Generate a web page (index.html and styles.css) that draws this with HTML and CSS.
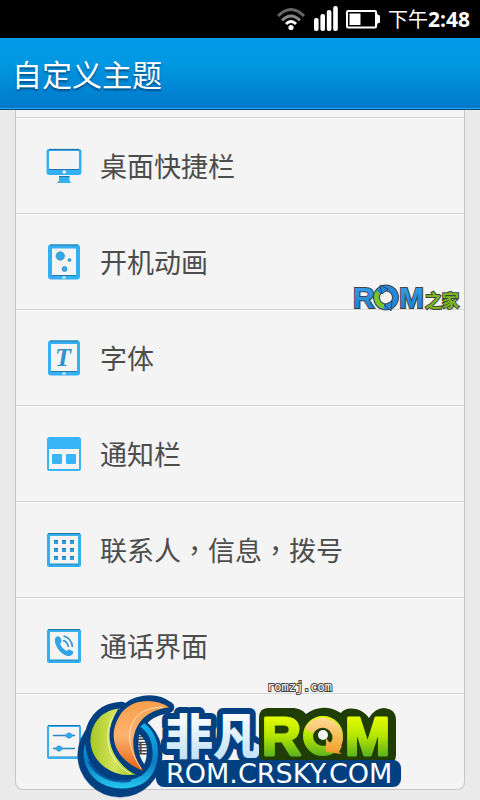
FILE: index.html
```html
<!DOCTYPE html>
<html lang="zh-CN">
<head>
  <meta charset="UTF-8">
  <meta name="viewport" content="width=device-width, initial-scale=1.0">
  <title>自定义主题</title>
  <link rel="stylesheet" href="styles.css">
</head>
<body>
  <div class="statusbar">
    <svg class="wifi" width="30" height="24" viewBox="0 0 30 24" fill="none" stroke-width="3">
      <path d="M2 9 Q15 -4 28 9" stroke="#666"/>
      <path d="M6 13.500 Q15 4.500 24 13.500" stroke="#888"/>
      <path d="M10 17 Q15 12 20 17" stroke="#fff"/>
      <circle cx="15" cy="20.500" r="2.600" fill="#fff"/>
    </svg>
    <svg class="signal" width="24" height="26" viewBox="0 0 24 26" fill="#fff">
      <rect x="0" y="12" width="4.600" height="13" rx="2"/>
      <rect x="6.400" y="8" width="4.600" height="17" rx="2"/>
      <rect x="12.800" y="4" width="4.600" height="21" rx="2"/>
      <rect x="19.200" y="0" width="4.600" height="25" rx="2"/>
    </svg>
    <svg class="battery" width="34" height="19" viewBox="0 0 34 19">
      <rect x="1" y="1" width="29" height="16.500" rx="1" fill="none" stroke="#fff" stroke-width="2"/>
      <path d="M30 1 L32 5 H33 Q34 5 34 7 V12 Q34 13 33 13 H32 L30 17.500 Z" fill="#fff"/>
      <rect x="3.500" y="3.500" width="11" height="11.500" fill="#fff"/>
    </svg>
    <span class="time">下午<b>2:48</b></span>
  </div>

  <header class="titlebar">
    <h1>自定义主题</h1>
  </header>

  <main class="content">
    <ul class="list">
      <li class="cut"></li>
      <li>
        <a class="row" href="#">
          <svg class="icon" viewBox="0 0 36 36">
            <path d="M3 1 H33 Q35.500 1 35.500 4 V24 Q35.500 27 33 27 H3 Q0.500 27 0.500 24 V4 Q0.500 1 3 1 Z" fill="#33b0f2"/>
            <path d="M3 1.500 H33" stroke="#2278ac" stroke-width="1.300"/>
            <rect x="3" y="3" width="30" height="18.500" rx="1" fill="#f4f4f4"/>
            <path d="M3 21.500 H33" stroke="#2278ac" stroke-width="1"/>
            <rect x="16.500" y="22.500" width="3.500" height="3" rx="1" fill="#f4f4f4"/>
            <path d="M13 28.500 H23.500 V33 L25.500 35 H10.500 L13 33 Z" fill="#33b0f2"/>
            <path d="M13 28.500 H23.500" stroke="#2278ac" stroke-width="1"/>
          </svg>
          <span>桌面快捷栏</span>
        </a>
      </li>
      <li>
        <a class="row" href="#">
          <svg class="icon" viewBox="0 0 36 36">
            <rect x="2" y="0.500" width="32" height="35" rx="3" fill="#33b0f2"/>
            <path d="M4 1 H32" stroke="#2278ac"/>
            <rect x="6" y="4.500" width="24" height="27" fill="#f4f4f4"/>
            <path d="M6 31.500 H30" stroke="#2278ac"/>
            <rect x="16.500" y="32.500" width="3" height="2" fill="#f4f4f4"/>
            <g fill="#33a9e8" stroke="#288abf" stroke-width="0.700">
              <circle cx="14.300" cy="12" r="4.200"/>
              <circle cx="23.500" cy="16" r="1.500"/>
              <circle cx="18.500" cy="25" r="2.500"/>
            </g>
          </svg>
          <span>开机动画</span>
        </a>
      </li>
      <li>
        <a class="row" href="#">
          <svg class="icon" viewBox="0 0 36 36">
            <rect x="2" y="0.500" width="32" height="35" rx="3" fill="#33b0f2"/>
            <path d="M4 1 H32" stroke="#2278ac"/>
            <rect x="5" y="4" width="26" height="27.500" fill="#f4f4f4"/>
            <path d="M5 31.500 H31" stroke="#2278ac"/>
            <rect x="16.500" y="32.500" width="3" height="2" fill="#f4f4f4"/>
            <text class="icon-t" x="17" y="26" text-anchor="middle">T</text>
          </svg>
          <span>字体</span>
        </a>
      </li>
      <li>
        <a class="row" href="#">
          <svg class="icon" viewBox="0 0 36 36">
            <rect x="1" y="1" width="34" height="34" rx="2.500" fill="#38b5f8"/>
            <rect x="3" y="13" width="30" height="20" fill="#f4f4f4"/>
            <rect x="6" y="18" width="10" height="10" rx="1" fill="#38b5f8"/>
            <rect x="20" y="18" width="10" height="10" rx="1" fill="#38b5f8"/>
          </svg>
          <span>通知栏</span>
        </a>
      </li>
      <li>
        <a class="row" href="#">
          <svg class="icon" viewBox="0 0 36 36">
            <rect x="1" y="1" width="34" height="34" rx="2" fill="#33b0f2"/>
            <path d="M2 1.500 H34 M4 32 H32" stroke="#2278ac"/>
            <rect x="4" y="4" width="28" height="27.500" fill="#f4f4f4"/>
            <g stroke="#2c9cdb" stroke-width="4" stroke-dasharray="4 4">
              <path d="M8 10 H28 M8 18 H28 M8 26 H28"/>
            </g>
            <g stroke="#2278ac" stroke-width="1" stroke-dasharray="4 4">
              <path d="M8 8.500 H28 M8 16.500 H28 M8 24.500 H28"/>
            </g>
          </svg>
          <span>联系人<i class="comma" lang="zh-TW">，</i>信息<i class="comma" lang="zh-TW">，</i>拨号</span>
        </a>
      </li>
      <li>
        <a class="row" href="#">
          <svg class="icon" viewBox="0 0 36 36">
            <rect x="1" y="1" width="34" height="34" rx="2" fill="#33b0f2"/>
            <path d="M2 1.500 H34 M4 32 H32" stroke="#2278ac"/>
            <rect x="4" y="4" width="28" height="27.500" fill="#f4f4f4"/>
            <path d="M10 9 Q8 11 9.500 16 Q12 23 18 26.500 Q22 29 25 27.500 Q28 25.500 27 23.500 L23.500 21.500 Q22 21 20.500 23 Q16 20.500 14 16 L15.500 14 Q16 13 15 11 L13.500 8.800 Q12 7.500 10 9 Z" fill="#2fa5e6"/>
            <path d="M17 12.500 Q21.500 13.500 22.500 19 M17.500 8 Q25.500 10 26.500 19" fill="none" stroke="#2b93cf" stroke-width="1.600"/>
          </svg>
          <span>通话界面</span>
        </a>
      </li>
      <li>
        <a class="row" href="#">
          <svg class="icon" viewBox="0 0 36 36">
            <rect x="1" y="1" width="34" height="34" rx="2" fill="#33b0f2"/>
            <path d="M2 1.500 H34 M4 32.500 H32" stroke="#2278ac"/>
            <rect x="3" y="3" width="30" height="29.500" fill="#f4f4f4"/>
            <path d="M7 11.500 H29 M7 24.500 H29" stroke="#2488c2" stroke-width="1.600"/>
            <path d="M19 11.500 Q23 6 27 11.500 Q23 17 19 11.500 Z M9 24.500 Q13 19 17 24.500 Q13 30 9 24.500 Z" fill="#33a9e8" stroke="#2488c2" stroke-width="0.500"/>
          </svg>
          <span>音量</span>
        </a>
      </li>
    </ul>
  </main>

  <!-- watermarks -->
  <svg class="mark mark-romzj" width="108" height="30" viewBox="353 283 108 30">
    <defs>
      <linearGradient id="romBlue" x1="0" y1="0" x2="0" y2="1">
        <stop offset="0" stop-color="#3aa5ee"/>
        <stop offset="1" stop-color="#1878cf"/>
      </linearGradient>
    </defs>
    <g class="rom-small" fill="url(#romBlue)">
      <text x="353" y="308">R</text>
      <text x="399" y="308">M</text>
    </g>
    <circle cx="386" cy="297.500" r="9.500" fill="none" stroke="#444" stroke-width="7"/>
    <circle cx="386" cy="297.500" r="9.500" fill="none" stroke="#2489dc" stroke-width="5"/>
    <path d="M378 292 A9.500 9.500 0 0 0 384 306.500" fill="none" stroke="#7cc51c" stroke-width="4.500"/>
    <path d="M380 285 L388 289 L382 294 Z M392 301 L384 305 L391 311 Z" fill="#2489dc" stroke="#333" stroke-width="0.800"/>
    <text class="home-small" x="425" y="307">之家</text>
  </svg>

  <svg class="mark mark-url" width="72" height="18" viewBox="264 678 72 18">
    <text x="267" y="691">romzj.com</text>
  </svg>

  <svg class="mark mark-logo" width="328" height="107" viewBox="78 693 328 107">
    <defs>
      <linearGradient id="green" x1="0" y1="0" x2="1" y2="0">
        <stop offset="0" stop-color="#a3c622"/>
        <stop offset="0.500" stop-color="#d3e45c"/>
        <stop offset="1" stop-color="#8fba1c"/>
      </linearGradient>
      <linearGradient id="orange" x1="0" y1="0" x2="0" y2="1">
        <stop offset="0" stop-color="#f9a04a"/>
        <stop offset="0.500" stop-color="#fbb270"/>
        <stop offset="1" stop-color="#e8620f"/>
      </linearGradient>
      <linearGradient id="ring" x1="0" y1="0" x2="0" y2="1">
        <stop offset="0" stop-color="#14b4ec"/>
        <stop offset="0.600" stop-color="#0a7cc4"/>
        <stop offset="1" stop-color="#25c8ee"/>
      </linearGradient>
      <linearGradient id="ice" x1="0" y1="0" x2="0" y2="1">
        <stop offset="0.200" stop-color="#ffffff"/>
        <stop offset="1" stop-color="#b4dcf5"/>
      </linearGradient>
      <linearGradient id="lime" gradientUnits="userSpaceOnUse" x1="0" y1="715" x2="0" y2="757">
        <stop offset="0" stop-color="#eaff00"/>
        <stop offset="0.500" stop-color="#b4e600"/>
        <stop offset="1" stop-color="#58b020"/>
      </linearGradient>
      <linearGradient id="arrow" gradientUnits="userSpaceOnUse" x1="0" y1="715" x2="0" y2="752">
        <stop offset="0" stop-color="#ffe09a"/>
        <stop offset="1" stop-color="#f2a02e"/>
      </linearGradient>
      <mask id="hole" maskUnits="userSpaceOnUse" x="-20" y="0" width="340" height="340">
        <rect x="-20" y="0" width="340" height="340" fill="#fff"/>
        <path d="M190 133 Q213 150 213 180 Q213 208 205 222 Q180 190 190 133 Z" fill="#000"/>
      </mask>
    </defs>

    <text class="feifan" x="167" y="754" fill="url(#ice)">非凡</text>

    <path d="M270 708 H296 Q304 709 308 714 Q325 702 343 713 Q347 707 358 709 Q366 711 371 718 Q377 708 386 708 Q398 709 398 720 V755 Q398 763 390 763 H270 Q261 762 261 752 V718 Q261 708 270 708 Z" fill="#1f3d05"/>
    <g class="rom-big" fill="url(#lime)" stroke="url(#lime)">
      <text x="264" y="755">R</text>
      <text x="347" y="755">M</text>
    </g>
    <circle cx="325" cy="736" r="15" fill="none" stroke="#1f3d05" stroke-width="15"/>
    <circle cx="325" cy="736" r="15" fill="none" stroke="url(#lime)" stroke-width="10"/>
    <path d="M311 731 A15 15 0 0 1 338 745" fill="none" stroke="url(#arrow)" stroke-width="10"/>
    <path d="M328 738 L331 742 L344 746 L341 752 L344 754 L328 752 Z" fill="url(#arrow)"/>
    <circle cx="325" cy="735" r="5" fill="#f4f4f4"/>

    <rect x="158" y="760" width="245" height="27" rx="8" fill="#003f80"/>
    <text class="crsky" x="168" y="783">ROM.CRSKY.COM</text>

    <g transform="translate(78 690) scale(0.333)">
      <g mask="url(#hole)" fill="#003f80" stroke="#003f80" stroke-linejoin="round">
        <circle cx="132" cy="195" r="127"/>
        <path stroke-width="34" d="M137 52 C70 55 42 105 42 155 C45 220 110 268 187 253 C120 230 90 150 137 52 Z"/>
        <path stroke-width="34" d="M278 52 C235 20 170 30 140 70 C90 140 125 225 200 243 C155 180 160 70 278 52 Z"/>
      </g>
      <path fill="url(#ring)" d="M205 100 C262 140 258 240 205 278 C150 312 62 298 34 236 C21 212 20 180 28 160 C30 215 62 262 120 272 C190 276 230 245 230 190 C230 150 215 125 193 110 Z"/>
      <path fill="none" stroke="#0653a0" stroke-width="6" d="M38 215 C60 260 110 282 165 272"/>
      <path fill="url(#green)" stroke="#003f80" stroke-width="6" d="M137 52 C70 55 40 105 40 155 C45 220 110 272 190 255 C120 230 90 150 137 52 Z"/>
      <path fill="none" stroke="#f2f7b4" stroke-width="3" d="M128 58 C78 110 82 210 165 252"/>
      <path fill="none" stroke="#003f80" stroke-width="14" d="M133 60 C84 135 108 215 194 250"/>
      <path fill="url(#orange)" d="M280 52 C235 22 170 27 138 67 C92 130 108 205 202 243 C150 180 160 65 280 52 Z"/>
      <path fill="none" stroke="#fde0bd" stroke-width="3" d="M262 52 C160 50 130 140 196 236"/>
    </g>
  </svg>
</body>
</html>
```
FILE: styles.css
```css
:root {
  --page-bg: #eaeaea;
  --card-bg: #f4f4f4;
  --line: #d3d3d3;
  --text: #4c4c4c;
  --navy: #003f80;
}

* {
  box-sizing: border-box;
}

body {
  position: relative;
  margin: 0;
  background: var(--page-bg);
  color: var(--text);
  font-family: "Noto Sans CJK SC", sans-serif;
}

.statusbar {
  display: flex;
  align-items: center;
  justify-content: flex-end;
  gap: 8px;
  height: 38px;
  padding-right: 10px;
  background: #000;
  color: #fff;
}
.time {
  font-size: 20px;
  line-height: 38px;
}
.time b {
  font-family: "Open Sans", sans-serif;
  font-size: 21px;
}

.titlebar {
  height: 72px;
  padding: 0 12px;
  background: linear-gradient(#009ae6, #0098e2 35%, #0078ca);
  border-bottom: 1px solid #0c4a7c;
  box-shadow: inset 0 -1px #22a5f2;
}
.titlebar h1 {
  margin: 0;
  color: #fff;
  font-size: 30px;
  font-weight: 400;
  line-height: 70px;
  text-shadow: 0 2px 2px rgba(0, 40, 80, 0.6);
}

.content {
  padding: 0 15px 11px;
}
.list {
  margin: 0;
  padding: 0;
  list-style: none;
  background: var(--card-bg);
  border: 1px solid #c6c6c6;
  border-top: 0;
  border-radius: 0 0 8px 8px;
}
.list li {
  border-top: 1px solid #fff;
  border-bottom: 1px solid var(--line);
}
.list li.cut {
  height: 8px;
  border-top: 0;
}
.list li:last-child {
  border-bottom: 0;
}
.row {
  display: flex;
  align-items: center;
  gap: 18px;
  height: 94px;
  padding: 0 30px;
  color: inherit;
  font-size: 27px;
  text-decoration: none;
}
.row span {
  padding-bottom: 2px;
}
.icon {
  width: 36px;
  height: 36px;
}
.icon-t {
  font: italic bold 26px "Liberation Serif", serif;
  fill: #2b93d0;
}
.comma {
  font-family: "Noto Sans CJK TC", sans-serif;
  font-style: normal;
}

.mark {
  position: absolute;
  overflow: visible;
  pointer-events: none;
}
.mark-romzj {
  top: 283px;
  right: 19px;
}
.rom-small {
  font: bold 30px "Liberation Sans", sans-serif;
  stroke: #444;
  stroke-width: 2px;
  paint-order: stroke;
}
.home-small {
  font: bold 17px "Noto Sans CJK SC", sans-serif;
  fill: #7cb81c;
  stroke: #444;
  stroke-width: 2px;
  paint-order: stroke;
}
.mark-url {
  top: 678px;
  right: 144px;
  font: 12px "DejaVu Sans Mono", monospace;
  fill: #fff;
  stroke: #444;
  stroke-width: 2px;
  paint-order: stroke;
}
.mark-logo {
  top: 693px;
  right: 0;
  left: 0;
  margin: 0 auto;
}
.feifan {
  font: 900 48px "Noto Sans CJK SC", sans-serif;
  stroke: var(--navy);
  stroke-width: 12px;
  stroke-linejoin: round;
  paint-order: stroke;
}
.rom-big {
  font: bold 54px "Liberation Sans", sans-serif;
  stroke-width: 3px;
  stroke-linejoin: round;
}
.crsky {
  font: 27px "DejaVu Sans", sans-serif;
  fill: #fff;
}
```
